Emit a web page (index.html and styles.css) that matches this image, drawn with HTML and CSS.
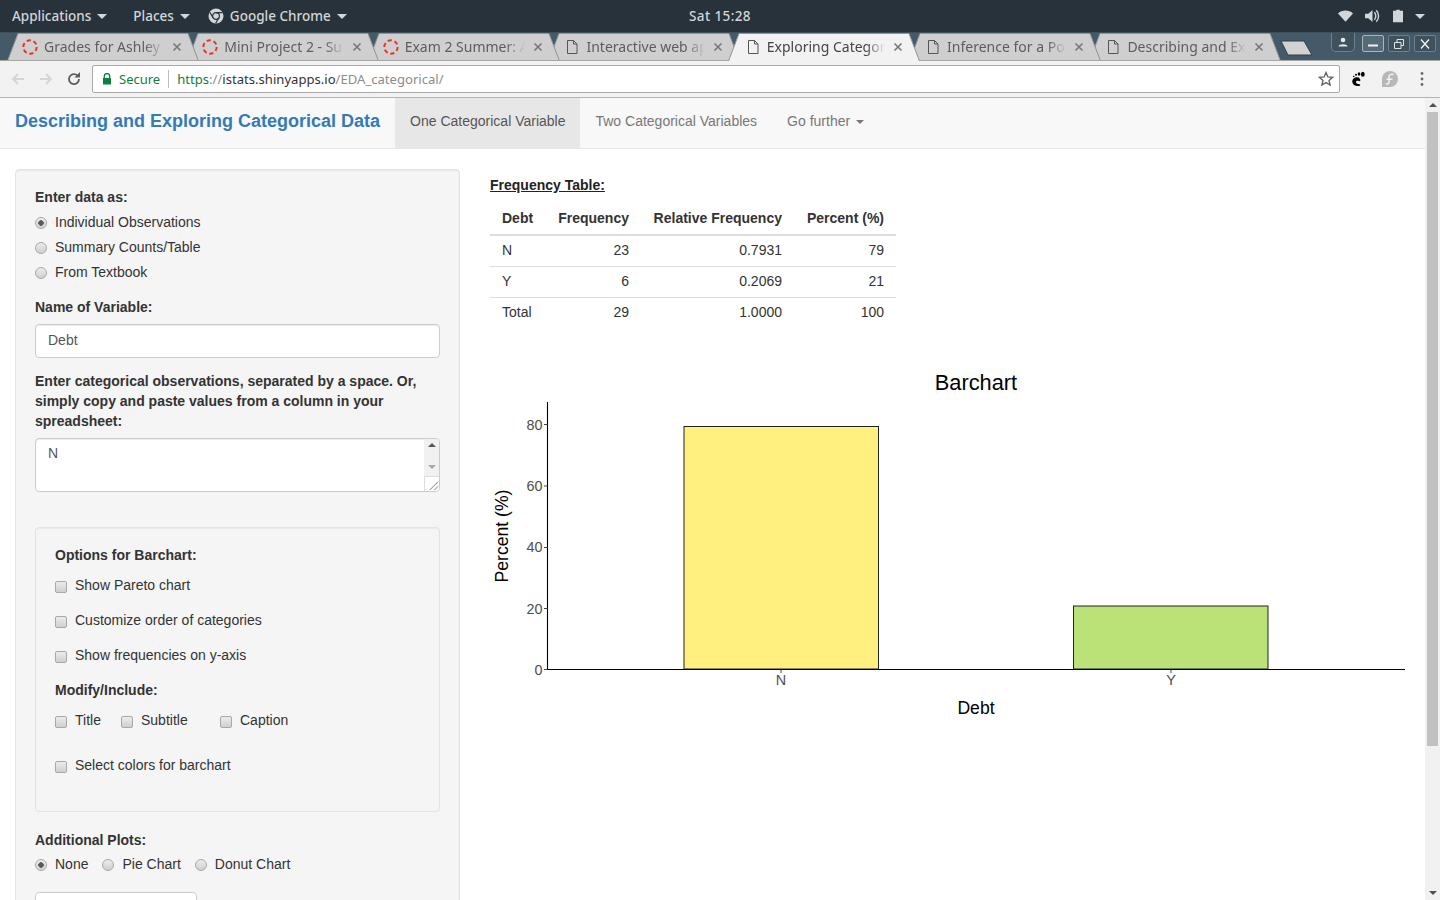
FILE: index.html
```html
<!DOCTYPE html>
<html lang="en">
<head>
<meta charset="utf-8">
<title>Describing and Exploring Categorical Data</title>
<link rel="stylesheet" href="styles.css">
</head>
<body>
<svg class="defs" width="0" height="0" aria-hidden="true">
  <defs>
    <symbol id="ring" viewBox="0 0 16 16"><circle cx="8" cy="8" r="6.7" fill="none" stroke="#e5352b" stroke-width="2" stroke-dasharray="4.2 2.8"/></symbol>
    <symbol id="doc" viewBox="0 0 12 14"><path d="M1.5 .5h6l3.500 3.500v9.500h-9.500z M7.500 .5v3.500h3.500" fill="none" stroke="#555" stroke-width="1"/></symbol>
    <symbol id="x" viewBox="0 0 10 10"><path d="M1.500 1.500l7 7M8.500 1.500l-7 7" fill="none" stroke="#777" stroke-width="1.600"/></symbol>
  </defs>
</svg>
<header class="topbar">
  <div class="top-left">
    <span class="top-item apps">Applications<i class="caret"></i></span>
    <span class="top-item places">Places<i class="caret"></i></span>
    <span class="top-item">
      <svg class="chrome-ico" viewBox="0 0 16 16"><circle cx="8" cy="8" r="7.500" fill="#d3d6d8"/><circle cx="8" cy="8" r="3.400" fill="#d3d6d8" stroke="#27323a" stroke-width="1.200"/><path d="M8 4.600h6.500M5 9.800L1.800 4.300M10.900 9.800L7.700 15.300" stroke="#27323a" stroke-width="1.200" fill="none"/></svg>
      Google Chrome<i class="caret"></i>
    </span>
  </div>
  <div class="clock">Sat 15:28</div>
  <div class="top-right">
    <svg class="tray wifi" viewBox="0 0 16 12"><path d="M0 3.200C4.500-.8 11.500-.8 16 3.200L8 12z" fill="#d3d6d8"/></svg>
    <svg class="tray sound" viewBox="0 0 16 14"><path d="M0 4.500h3.500L8 .5v13l-4.500-4H0z" fill="#d3d6d8"/><path d="M10 3c2 2 2 6 0 8M12 1c3.300 3 3.300 9 0 12" stroke="#d3d6d8" stroke-width="1.500" fill="none"/></svg>
    <svg class="tray batt" viewBox="0 0 11 14"><path d="M3.500 0h4v1.300h3.500V14H0V1.300h3.500z" fill="#d3d6d8"/></svg>
    <i class="caret tray-caret"></i>
  </div>
</header>

<div class="tabstrip">
  <div class="tab t1"><svg class="tab-shape" viewBox="0 0 192 28"><path d="M.5 28L11 .5h170L191.500 28"/></svg><svg class="fav" viewBox="0 0 16 16"><use href="#ring"/></svg><span class="tab-title">Grades for Ashley</span><svg class="close" viewBox="0 0 10 10"><use href="#x"/></svg></div>
  <div class="tab t2"><svg class="tab-shape" viewBox="0 0 192 28"><path d="M.5 28L11 .5h170L191.500 28"/></svg><svg class="fav" viewBox="0 0 16 16"><use href="#ring"/></svg><span class="tab-title">Mini Project 2 - Su</span><svg class="close" viewBox="0 0 10 10"><use href="#x"/></svg></div>
  <div class="tab t3"><svg class="tab-shape" viewBox="0 0 192 28"><path d="M.5 28L11 .5h170L191.500 28"/></svg><svg class="fav" viewBox="0 0 16 16"><use href="#ring"/></svg><span class="tab-title">Exam 2 Summer: A</span><svg class="close" viewBox="0 0 10 10"><use href="#x"/></svg></div>
  <div class="tab t4"><svg class="tab-shape" viewBox="0 0 192 28"><path d="M.5 28L11 .5h170L191.500 28"/></svg><svg class="fav doc" viewBox="0 0 12 14"><use href="#doc"/></svg><span class="tab-title">Interactive web ap</span><svg class="close" viewBox="0 0 10 10"><use href="#x"/></svg></div>
  <div class="tab t5 active"><svg class="tab-shape" viewBox="0 0 192 28"><path d="M.5 28L11 .5h170L191.500 28"/></svg><svg class="fav doc" viewBox="0 0 12 14"><use href="#doc"/></svg><span class="tab-title">Exploring Categori</span><svg class="close" viewBox="0 0 10 10"><use href="#x"/></svg></div>
  <div class="tab t6"><svg class="tab-shape" viewBox="0 0 192 28"><path d="M.5 28L11 .5h170L191.500 28"/></svg><svg class="fav doc" viewBox="0 0 12 14"><use href="#doc"/></svg><span class="tab-title">Inference for a Pop</span><svg class="close" viewBox="0 0 10 10"><use href="#x"/></svg></div>
  <div class="tab t7"><svg class="tab-shape" viewBox="0 0 192 28"><path d="M.5 28L11 .5h170L191.500 28"/></svg><svg class="fav doc" viewBox="0 0 12 14"><use href="#doc"/></svg><span class="tab-title">Describing and Exp</span><svg class="close" viewBox="0 0 10 10"><use href="#x"/></svg></div>
  <svg class="newtab" viewBox="0 0 33 16"><path d="M1 1h23l8 14H8z" fill="#d2d2d2" stroke="#2f3f49" stroke-width="1"/></svg>
  <div class="winbtns">
    <span class="wb user"><svg viewBox="0 0 12 10"><circle cx="6" cy="3" r="2.300" fill="#e4e8ea"/><path d="M1.500 9.500c0-3 9-3 9 0z" fill="#e4e8ea"/></svg></span>
    <span class="wb minb"><svg viewBox="0 0 12 10"><path d="M1 6.500h10" stroke="#eef1f2" stroke-width="2"/></svg></span>
    <span class="wb"><svg viewBox="0 0 12 10"><path d="M1.500 3.500h6.500v6h-6.500zM4 3.500v-3h6.500v6h-2.500" fill="none" stroke="#dfe4e6" stroke-width="1"/></svg></span>
    <span class="wb"><svg viewBox="0 0 12 10"><path d="M2 .5l8 9M10 .5l-8 9" stroke="#eef1f2" stroke-width="1.400"/></svg></span>
  </div>
</div>

<div class="toolbar">
  <svg class="nav-ico" viewBox="0 0 16 16"><path d="M14 8H3M8 3L3 8l5 5" fill="none" stroke="#d4d4d4" stroke-width="1.800"/></svg>
  <svg class="nav-ico" viewBox="0 0 16 16"><path d="M2 8h11M8 3l5 5-5 5" fill="none" stroke="#d4d4d4" stroke-width="1.800"/></svg>
  <svg class="nav-ico reload" viewBox="0 0 16 16"><path d="M13 8a5 5 0 1 1-1.500-3.500" fill="none" stroke="#5f5f5f" stroke-width="1.800"/><path d="M14 1v5.500H8.500z" fill="#5f5f5f"/></svg>
  <div class="omnibox">
    <svg class="lock" viewBox="0 0 10 12"><path d="M2.300 5V3.300a2.700 2.700 0 0 1 5.400 0V5" fill="none" stroke="#0b8043" stroke-width="1.300"/><rect x="1" y="5" width="8" height="6.500" fill="#0b8043"/></svg>
    <span class="secure">Secure</span>
    <span class="url"><span class="u-green">https</span><span class="u-grey">://</span><span class="u-dark">istats.shinyapps.io</span><span class="u-grey">/EDA_categorical/</span></span>
    <svg class="star" viewBox="0 0 16 16"><path d="M8 1.500l1.900 4.400 4.700.4-3.600 3.100 1.100 4.600L8 11.600l-4.100 2.400L5 9.400 1.400 6.300l4.700-.4z" fill="none" stroke="#5f5f5f" stroke-width="1.300"/></svg>
  </div>
  <svg class="ext gnome" viewBox="0 0 14 16"><path d="M7.500 6.500C4 5.500 1 8 1.300 11c.3 3 3.500 4.500 6.500 4 1.500-.2 2-1.500.8-1.800-1.800-.5-3.500-.2-3.600-2-.1-1.500 1.800-1.700 3-1.200 1.200.5 1.800-.5 1.200-1.500-.4-.8-1-1.700-1.700-2z" fill="#000"/><ellipse cx="11.800" cy="3.200" rx="1.900" ry="2.500" fill="#000"/><ellipse cx="8" cy="3" rx="1.300" ry="1.800" fill="#000"/><circle cx="5" cy="3.800" r="1" fill="#000"/><circle cx="2.800" cy="5.500" r=".8" fill="#000"/></svg>
  <svg class="ext fedora" viewBox="0 0 16 16"><path d="M8 0a8 8 0 0 1 0 16H0V8a8 8 0 0 1 8-8z" fill="#b8b8b8"/><path d="M11.500 3.500c-2.500-1-4.500.3-4.500 2.700V11c0 1.800-1.500 2.400-3.200 1.600M4.500 8.200h6" fill="none" stroke="#f2f2f2" stroke-width="1.500"/></svg>
  <svg class="ext dots" viewBox="0 0 4 16"><circle cx="2" cy="2.500" r="1.400" fill="#6b6b6b"/><circle cx="2" cy="8" r="1.400" fill="#6b6b6b"/><circle cx="2" cy="13.500" r="1.400" fill="#6b6b6b"/></svg>
</div>

<div class="viewport">
  <div class="page">
    <nav class="navbar">
      <a class="brand">Describing and Exploring Categorical Data</a>
      <a class="navlink current">One Categorical Variable</a>
      <a class="navlink">Two Categorical Variables</a>
      <a class="navlink">Go further<i class="nav-caret"></i></a>
    </nav>
    <main class="content">
      <aside class="well">
        <div class="group g-radio">
          <div class="label">Enter data as:</div>
          <label class="opt"><input type="radio" name="mode" checked><span>Individual Observations</span></label>
          <label class="opt"><input type="radio" name="mode"><span>Summary Counts/Table</span></label>
          <label class="opt"><input type="radio" name="mode"><span>From Textbook</span></label>
        </div>
        <div class="group g-name">
          <div class="label">Name of Variable:</div>
          <div class="textbox">Debt</div>
        </div>
        <div class="group g-obs">
          <div class="label">Enter categorical observations, separated by a space. Or, simply copy and paste values from a column in your spreadsheet:</div>
          <div class="textarea">N
            <div class="ta-scroll">
              <span class="arr up"></span>
              <span class="arr down"></span>
              <svg class="grip" viewBox="0 0 15 15"><path d="M14 5L5 14M14 10l-4 4" stroke="#777" stroke-width="1"/></svg>
            </div>
          </div>
        </div>
        <section class="inner-well">
          <div class="label l-options">Options for Barchart:</div>
          <label class="chk"><input type="checkbox"><span>Show Pareto chart</span></label>
          <label class="chk"><input type="checkbox"><span>Customize order of categories</span></label>
          <label class="chk"><input type="checkbox"><span>Show frequencies on y-axis</span></label>
          <div class="label l-modify">Modify/Include:</div>
          <div class="chk-row">
            <label class="chk inl c-title"><input type="checkbox"><span>Title</span></label>
            <label class="chk inl c-sub"><input type="checkbox"><span>Subtitle</span></label>
            <label class="chk inl"><input type="checkbox"><span>Caption</span></label>
          </div>
          <label class="chk c-colors"><input type="checkbox"><span>Select colors for barchart</span></label>
        </section>
        <div class="group g-add">
          <div class="label">Additional Plots:</div>
          <div class="opt-row">
            <label class="opt inl"><input type="radio" name="plot" checked><span>None</span></label>
            <label class="opt inl"><input type="radio" name="plot"><span>Pie Chart</span></label>
            <label class="opt inl"><input type="radio" name="plot"><span>Donut Chart</span></label>
          </div>
        </div>
        <div class="cutoff"></div>
      </aside>
      <section class="results">
        <h4 class="table-title">Frequency Table:</h4>
        <table class="freq">
          <thead><tr><th class="left">Debt</th><th>Frequency</th><th>Relative Frequency</th><th>Percent (%)</th></tr></thead>
          <tbody>
            <tr><td class="left">N</td><td>23</td><td>0.7931</td><td>79</td></tr>
            <tr><td class="left">Y</td><td>6</td><td>0.2069</td><td>21</td></tr>
            <tr><td class="left">Total</td><td>29</td><td>1.0000</td><td>100</td></tr>
          </tbody>
        </table>
        <svg class="chart" width="935" height="370" viewBox="490 360 935 370">
          <text class="c-title-t" x="976" y="390" text-anchor="middle">Barchart</text>
          <rect class="bar" x="684" y="426.500" width="194.500" height="242.500" fill="#fff07f"/>
          <rect class="bar" x="1073.500" y="606" width="194.500" height="63" fill="#bae276"/>
          <path class="axis" d="M547.500 402V669.500H1405"/>
          <path class="tick" d="M544 424.500h3.500M544 486h3.500M544 547.500h3.500M544 608.500h3.500M544 669.500h3.500M781 669.500v3.500M1171 669.500v3.500"/>
          <g class="tl">
            <text x="542.500" y="429.500" text-anchor="end">80</text>
            <text x="542.500" y="490.500" text-anchor="end">60</text>
            <text x="542.500" y="551.500" text-anchor="end">40</text>
            <text x="542.500" y="613.500" text-anchor="end">20</text>
            <text x="542.500" y="674.500" text-anchor="end">0</text>
            <text x="781" y="685" text-anchor="middle">N</text>
            <text x="1171" y="685" text-anchor="middle">Y</text>
          </g>
          <text class="c-axis" x="976" y="714" text-anchor="middle">Debt</text>
          <text class="c-axis" x="508" y="536" text-anchor="middle" transform="rotate(-90 508 536)">Percent (%)</text>
        </svg>
      </section>
    </main>
  </div>
  <div class="scrollbar">
    <span class="sb-arrow sb-up"></span>
    <div class="sb-track"><div class="sb-thumb"></div></div>
    <span class="sb-arrow sb-down"></span>
  </div>
</div>
</body>
</html>
```
FILE: styles.css
```css
* { box-sizing: border-box; }
html, body { margin: 0; height: 100%; overflow: hidden; }
body { width: 1440px; height: 900px; font-family: "Liberation Sans", Arial, sans-serif; font-size: 14px; color: #333; display: flex; flex-direction: column; background: #fff; }
.defs { display: block; height: 0; }

.topbar { height: 32px; flex: none; background: #27323a; color: #d3d6d8; display: grid; grid-template-columns: 1fr auto 1fr; align-items: center; font-family: "Noto Sans", sans-serif; font-size: 13.500px; font-weight: 500; }
.top-left { display: flex; align-items: center; padding-left: 12px; }
.top-item { display: flex; align-items: center; }
.apps { margin-right: 26px; }
.places { margin-right: 18px; }
.chrome-ico { width: 16px; height: 16px; margin-right: 6px; }
.caret { display: inline-block; width: 0; height: 0; border: 5px solid transparent; border-top: 5px solid #d3d6d8; border-bottom: 0; margin-left: 6px; }
.clock { text-align: center; letter-spacing: .4px; }
.top-right { display: flex; justify-content: flex-end; align-items: center; padding-right: 15px; }
.tray { display: block; }
.wifi { width: 15px; height: 12px; margin-right: 12px; }
.sound { width: 15px; height: 14px; margin-right: 13px; }
.batt { width: 10px; height: 14px; margin-right: 12px; }
.tray-caret { margin-left: 0; }

.tabstrip { height: 29px; flex: none; background: #445a68; display: flex; align-items: flex-end; padding-left: 7px; position: relative; border-top: 1px solid #3c4f5b; border-bottom: 1px solid #a5a5a5; }
.tab { width: 192px; height: 27px; margin-right: -11.700px; position: relative; display: flex; align-items: center; padding: 0 17px 0 15px; color: #5d5d5d; font-family: "Noto Sans", sans-serif; font-size: 14px; flex: none; }
.tab:not(.active)::after { content: ""; position: absolute; left: 0; right: 0; bottom: -1px; height: 1px; background: #a5a5a5; }
.tab-shape { position: absolute; left: 0; top: 0; width: 192px; height: 28px; overflow: visible; }
.tab-shape path { fill: #cfcfcf; stroke: #8e9498; stroke-width: 1; }
.tab.active .tab-shape path { fill: #f2f2f2; stroke: #8e9498; }
.tab.active { color: #454545; }
.t1 { z-index: 7; } .t2 { z-index: 6; } .t3 { z-index: 5; } .t4 { z-index: 4; } .t5 { z-index: 8; } .t6 { z-index: 3; } .t7 { z-index: 2; }
.fav { position: relative; width: 16px; height: 16px; flex: none; margin-right: 6px; }
.fav.doc { width: 12px; height: 14px; margin-left: 3.500px; margin-right: 8px; }
.tab-title { position: relative; flex: 1; white-space: nowrap; overflow: hidden; -webkit-mask-image: linear-gradient(to right, #000 84%, transparent 100%); mask-image: linear-gradient(to right, #000 84%, transparent 100%); }
.close { position: relative; width: 10px; height: 10px; flex: none; margin-left: 8px; }
.newtab { width: 33px; height: 16px; margin: 0 0 4px 10.900px; flex: none; z-index: 1; }
.winbtns { position: absolute; top: 0; right: 4px; display: flex; gap: 4px; }
.wb { width: 22px; height: 17px; margin-top: 2px; border: 1px solid #6d8090; border-radius: 2px; display: flex; align-items: center; justify-content: center; background: #3e525e; }
.wb svg { width: 12px; height: 10px; }
.wb.user { margin: 0 3px 0 0; height: 19px; width: 24px; border-top: 0; border-radius: 0 0 5px 5px; }
.wb.minb { border-color: #a9b6bd; background: #566b78; }

.toolbar { height: 37px; flex: none; background: #f2f2f2; display: flex; align-items: center; padding: 0 8px 0 8px; border-bottom: 1px solid #b4b4b4; }
.nav-ico { width: 16px; height: 16px; margin-left: 2px; margin-right: 10px; flex: none; }
.omnibox { width: 1248px; height: 28px; flex: none; background: #fff; border: 1px solid #a9a9a9; border-radius: 2px; display: flex; align-items: center; padding: 0 5px 0 9px; font-family: "Noto Sans", sans-serif; font-size: 13.100px; }
.lock { width: 10px; height: 12px; margin-right: 7px; flex: none; }
.secure { color: #0b8043; padding-right: 8px; margin-right: 8px; border-right: 1px solid #bdbdbd; line-height: 18px; font-size: 13px; }
.url { flex: 1; white-space: nowrap; }
.u-green { color: #0b8043; } .u-grey { color: #8c8c8c; } .u-dark { color: #333; }
.star { width: 16px; height: 16px; margin-left: 8px; }
.ext { flex: none; }
.gnome { width: 14px; height: 16px; margin-left: 11px; }
.fedora { width: 16px; height: 16px; margin-left: 17px; }
.dots { width: 4px; height: 16px; margin-left: 22px; }

.viewport { flex: 1; min-height: 0; display: flex; overflow: hidden; }
.page { width: 1425px; flex: none; }
.navbar { height: 51px; background: #f8f8f8; border-bottom: 1px solid #e7e7e7; display: flex; }
.brand { font-size: 18px; font-weight: 700; color: #337ab7; padding: 0 15px; line-height: 46px; white-space: nowrap; }
.navlink { padding: 0 15px; line-height: 46px; color: #777; white-space: nowrap; height: 50px; }
.navlink.current { background: #e7e7e7; color: #555; }
.nav-caret { display: inline-block; width: 0; height: 0; border: 4px solid transparent; border-top: 4px solid #777; border-bottom: 0; margin-left: 6px; vertical-align: middle; }

.content { display: flex; padding: 20px 0 0 15px; }
.well { width: 445px; flex: none; background: #f5f5f5; border: 1px solid #e3e3e3; border-radius: 4px; padding: 17px 19px 0; height: 760px; box-shadow: inset 0 1px 1px rgba(0,0,0,.05); }
.label { font-weight: 700; line-height: 20px; }
.opt { display: flex; align-items: flex-start; line-height: 20px; margin-top: 5px; }
input { appearance: none; -webkit-appearance: none; margin: 0; width: 12px; height: 12px; flex: none; background: linear-gradient(#ececec, #cfcfcf); border: 1px solid #a8a8a8; }
input[type=radio] { border-radius: 50%; margin: 5px 8px 0 0; }
input[type=radio]:checked { background: radial-gradient(circle, #5a5a5a 0, #5a5a5a 2.500px, transparent 3px), linear-gradient(#eee, #d2d2d2); }
input[type=checkbox] { border-radius: 2px; margin: 6px 8px 0 0; }
.g-name { margin-top: 15px; }
.textbox { height: 34px; margin-top: 7px; background: #fff; border: 1px solid #ccc; border-radius: 4px; padding: 5px 12px; line-height: 20px; color: #555; box-shadow: inset 0 1px 1px rgba(0,0,0,.075); }
.g-obs { margin-top: 13px; }
.textarea { height: 54px; margin-top: 7px; background: #fff; border: 1px solid #ccc; border-radius: 4px; padding: 4px 12px; line-height: 20px; color: #555; position: relative; box-shadow: inset 0 1px 1px rgba(0,0,0,.075); overflow: hidden; }
.ta-scroll { position: absolute; top: 0; right: 0; width: 15px; height: 52px; background: #f1f1f1; }
.arr { position: absolute; left: 4px; width: 0; height: 0; border: 4px solid transparent; }
.up { top: 4px; border-top: 0; border-bottom: 4px solid #555; }
.down { top: 26px; border-bottom: 0; border-top: 4px solid #a9a9a9; }
.grip { position: absolute; left: 0; bottom: 0; width: 15px; height: 15px; background: #fff; border-left: 1px solid #ddd; border-top: 1px solid #ddd; }
.inner-well { margin-top: 35px; height: 285px; border: 1px solid #e3e3e3; border-radius: 4px; background: #f5f5f5; padding: 17px 19px 0; box-shadow: inset 0 1px 1px rgba(0,0,0,.05); }
.chk { display: flex; align-items: flex-start; line-height: 20px; margin-top: 15px; }
.l-options + .chk { margin-top: 10px; }
.l-modify { margin-top: 15px; }
.chk-row { display: flex; margin-top: 10px; }
.chk.inl { margin-top: 0; }
.c-title { width: 66px; }
.c-sub { width: 99px; }
.c-colors { margin-top: 25px; }
.g-add { margin-top: 18px; }
.opt-row { display: flex; margin-top: 4px; }
.opt.inl { margin-top: 0; margin-right: 14px; }
.cutoff { width: 162px; height: 34px; margin-top: 18px; background: #fff; border: 1px solid #ccc; border-radius: 4px; }

.results { flex: 1; padding-left: 30px; min-width: 0; }
.table-title { margin: 8px 0 0; font-size: 14px; line-height: 16px; font-weight: 700; text-decoration: underline; color: #222; }
.freq { border-collapse: collapse; table-layout: fixed; width: 406px; margin-top: 9px; }
.freq th, .freq td { padding: 0 12px; height: 31px; text-align: right; line-height: 20px; white-space: nowrap; }
.freq th { border-bottom: 2px solid #ddd; height: 33px; padding-bottom: 1px; }
.freq td { padding-bottom: 2px; }
.freq th:nth-child(1) { width: 56px; }
.freq th:nth-child(2) { width: 95px; }
.freq th:nth-child(3) { width: 153px; }
.freq th:nth-child(4) { width: 102px; }
.freq td { border-top: 1px solid #ddd; }
.freq tbody tr:first-child td { border-top: 0; }
.freq .left { text-align: left; }
.chart { display: block; margin-top: 32px; }
.c-title-t { font-size: 21.800px; fill: #000; font-family: "Liberation Sans", sans-serif; }
.c-axis { font-size: 17.600px; fill: #000; font-family: "Liberation Sans", sans-serif; }
.tl text { font-size: 14.400px; fill: #4d4d4d; font-family: "Liberation Sans", sans-serif; }
.bar { stroke: #222; stroke-width: 1; }
.axis { fill: none; stroke: #000; stroke-width: 1.100; }
.tick { fill: none; stroke: #444; stroke-width: 1; }

.scrollbar { width: 15px; flex: none; background: #f1f1f1; display: flex; flex-direction: column; align-items: center; }
.sb-arrow { width: 0; height: 0; border: 4px solid transparent; flex: none; margin: 5px 0; }
.sb-up { border-top: 0; border-bottom: 4px solid #505050; }
.sb-down { border-bottom: 0; border-top: 4px solid #505050; }
.sb-track { flex: 1; width: 100%; padding: 0 2px; }
.sb-thumb { height: 634px; background: #c1c1c1; }
```
